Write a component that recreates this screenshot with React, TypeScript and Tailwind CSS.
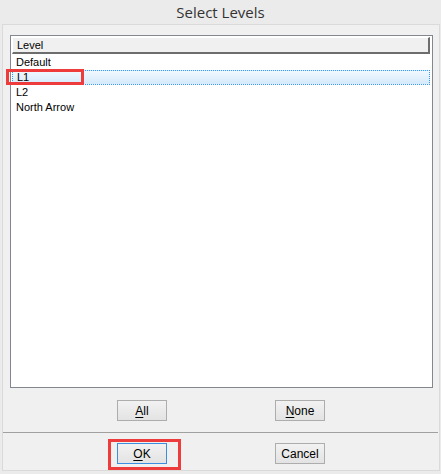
import React from "react";

const levels = ["Default", "L1", "L2", "North Arrow"];

const Btn = ({ label, ul, focused }: { label: string; ul?: boolean; focused?: boolean }) => (
  <button
    className={`w-[50px] h-[21px] border ${
      focused ? "border-[#3c8ee0]" : "border-[#adadad]"
    } bg-gradient-to-b from-[#f2f2f2] to-[#e3e3e3] text-[12px] text-black leading-none`}
  >
    {ul ? (
      <>
        <span className="underline underline-offset-2">{label[0]}</span>
        {label.slice(1)}
      </>
    ) : (
      label
    )}
  </button>
);

export default function App() {
  return (
    <div className="w-[441px] h-[474px] bg-[#ebebeb] font-['Liberation_Sans',Arial,sans-serif] text-[11px] text-black">
      <div className="h-[24px] flex items-center justify-center text-[15px] text-[#333] font-['Open_Sans',sans-serif]">
        Select Levels
      </div>
      <div className="ml-[2px] w-[438px] h-[447px] border border-[#dadada] bg-[#f0f0f0] flex flex-col">
        <div className="relative ml-[7px] mt-[10px] w-[423px] h-[353px] border border-[#828790] bg-white p-px">
          <div className="h-[17px] bg-[#f0f0f0] border-t border-l border-white border-r-2 border-b-2 border-r-[#6d6d6d] border-b-[#6d6d6d] mr-px flex items-center pl-[4px]">
            Level
          </div>
          <div className="pt-[1px]">
            {levels.map((l) => (
              <div
                key={l}
                className={`h-[15px] flex items-center pl-[4px] mr-px ${
                  l === "L1"
                    ? "bg-gradient-to-b from-[#f1f8fe] to-[#d5eafb] border border-dotted border-[#3399ff] pl-[3px]"
                    : ""
                }`}
              >
                {l}
              </div>
            ))}
          </div>
          <div className="absolute left-[-5px] top-[33px] w-[78px] h-[16px] border-[3px] border-[#ee3b3b]" />
        </div>
        <div className="flex justify-center gap-[108px] mt-[12px]">
          <Btn label="All" ul />
          <Btn label="None" ul />
        </div>
        <div className="mt-[11px] h-px bg-[#a0a0a0] mr-[1px]" />
        <div className="flex justify-center gap-[108px] mt-[10px]">
          <div className="relative">
            <Btn label="OK" ul focused />
            <div className="absolute left-[-9px] top-[-4px] w-[73px] h-[31px] border-[3px] border-[#ee3b3b]" />
          </div>
          <Btn label="Cancel" />
        </div>
      </div>
    </div>
  );
}
